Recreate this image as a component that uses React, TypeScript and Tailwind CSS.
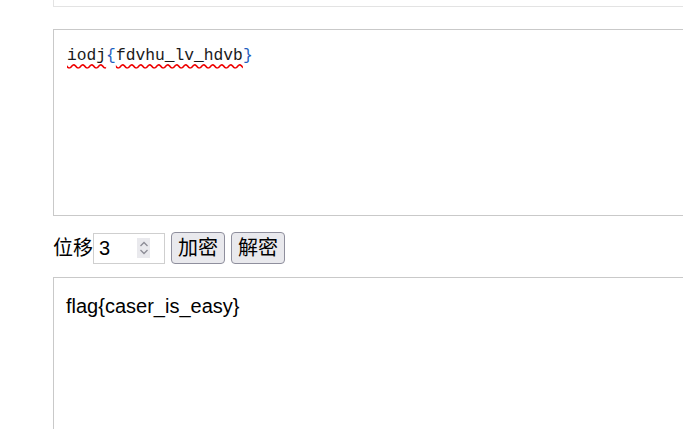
import { useState } from "react";

function Spinner() {
  return (
    <div className="flex h-[20px] w-[13px] flex-col items-center justify-center bg-[#e9e9ed]">
      <svg width="10" height="18" viewBox="0 0 10 18" fill="none" stroke="#8d8d96" strokeWidth="1.3">
        <path d="M1.5 7 L5 3.5 L8.5 7" />
        <path d="M1.5 11 L5 14.5 L8.5 11" />
      </svg>
    </div>
  );
}

export default function App() {
  const [shift] = useState(3);

  return (
    <div className="h-[429px] w-[683px] overflow-hidden bg-white text-[20px] text-black [font-family:'Liberation_Sans','Noto_Sans_CJK_SC',sans-serif]">
      <div className="pl-[53px]">
        <div className="h-[7px] w-[700px] border border-t-0 border-[#e3e3e3]" />

        <div className="mt-[22px] h-[187px] w-[700px] border border-[#c9c9c9] px-[13px] pt-[14px]">
          <div className="text-[16.3px] leading-[24px] text-[#1a1a1a] [font-family:'Liberation_Mono',monospace]">
            <span className="underline decoration-wavy decoration-[#e00] underline-offset-[3px]">iodj</span>
            <span className="text-[#1f5fbf]">{"{"}</span>
            <span className="underline decoration-wavy decoration-[#e00] underline-offset-[3px]">fdvhu_lv_hdvb</span>
            <span className="text-[#1f5fbf]">{"}"}</span>
          </div>
        </div>

        <div className="mt-[16px] flex items-center">
          <span className="leading-[31px]">位移</span>
          <div className="flex h-[31px] w-[72px] items-center border border-[#cfcfcf] pl-[5px]">
            <span className="flex-1 leading-none">{shift}</span>
            <div className="mr-[14px]">
              <Spinner />
            </div>
          </div>
          <button className="ml-[6px] h-[32px] w-[54px] rounded-[4px] border border-[#8f8f9d] bg-[#e9e9ed] text-[20px] leading-none">
            加密
          </button>
          <button className="ml-[6px] h-[32px] w-[54px] rounded-[4px] border border-[#8f8f9d] bg-[#e9e9ed] text-[20px] leading-none">
            解密
          </button>
        </div>

        <div className="mt-[13px] h-[200px] w-[700px] border border-[#c9c9c9] px-[12px] pt-[16px]">
          <div className="leading-[24px]">flag{"{"}caser_is_easy{"}"}</div>
        </div>
      </div>
    </div>
  );
}
